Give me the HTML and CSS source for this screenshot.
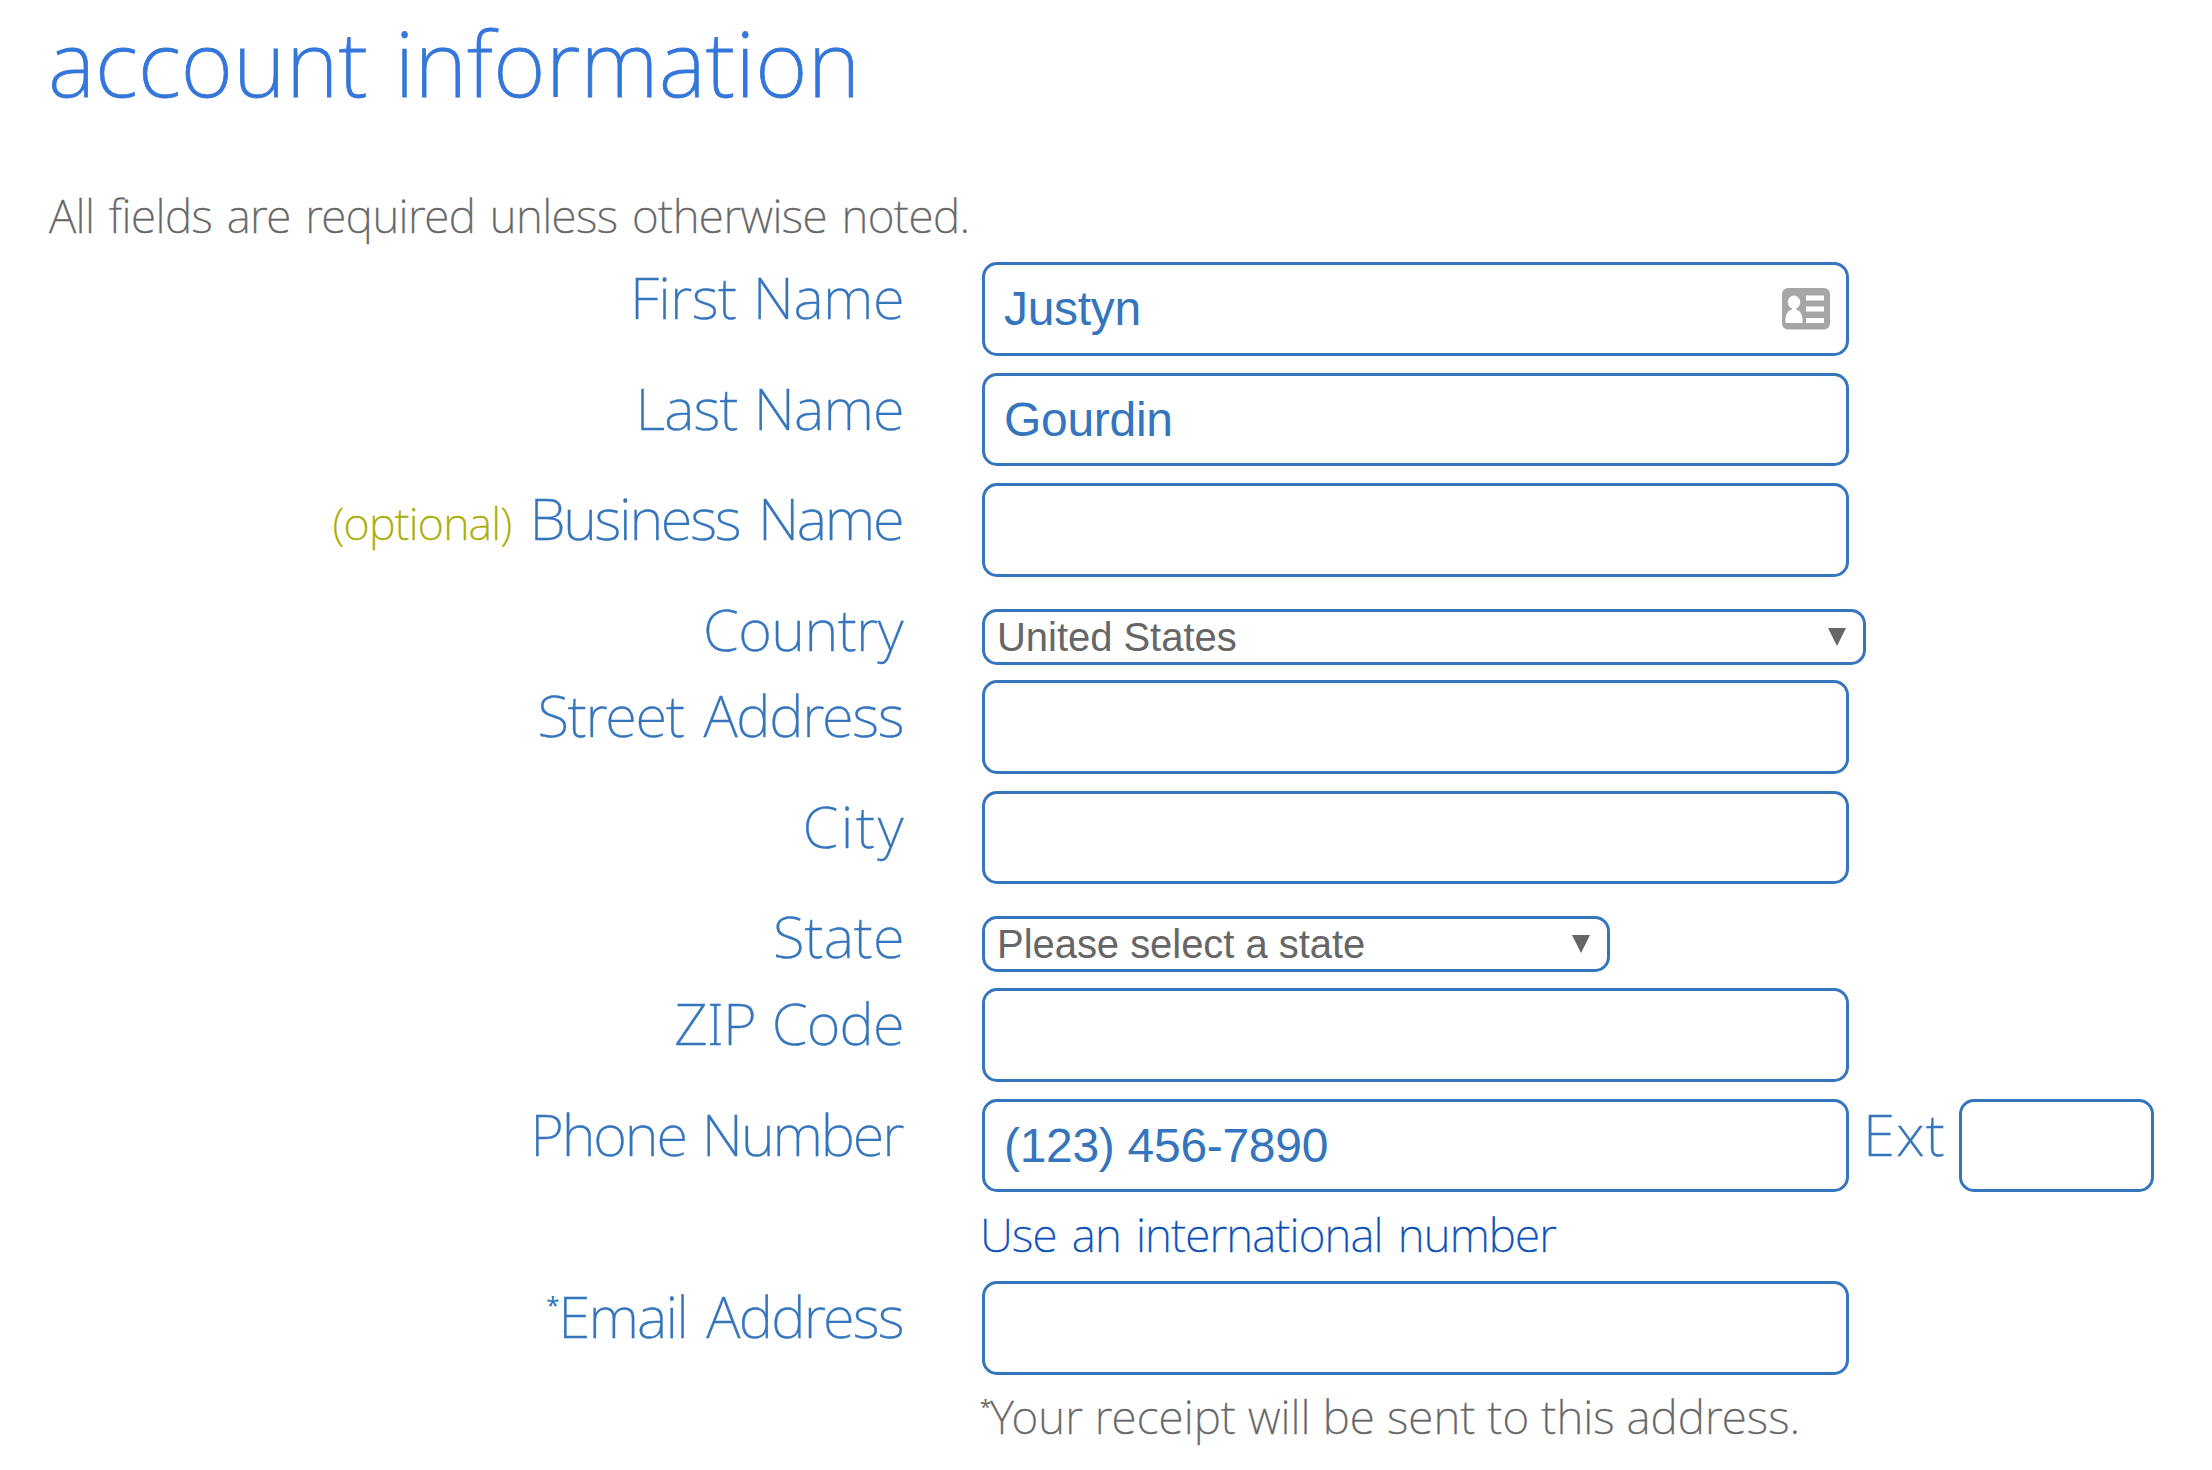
FILE: index.html
```
<!DOCTYPE html>
<html lang="en">
<head>
<meta charset="utf-8">
<title>Account information</title>
<link rel="stylesheet" href="styles.css">
</head>
<body>
<h1 class="title">account information</h1>
<p class="intro">All fields are required unless otherwise noted.</p>
<form class="form">
  <div class="row">
    <label class="label first" for="first">First Name</label>
    <div class="control">
      <input class="input" id="first" type="text" value="Justyn">
      <svg class="card-icon" viewBox="0 0 48 42" width="48" height="42">
        <rect width="48" height="41.5" rx="6" fill="#a6a6a6"/>
        <g fill="#fff">
          <ellipse cx="12" cy="14.300" rx="6.200" ry="6.800"/>
          <path d="M10 19h4v2.500c4 1 6.500 5 6.500 10V35h-17v-3.500c0-5 2.500-9 6.500-10z"/>
          <rect x="24" y="7.500" width="18" height="5"/>
          <rect x="24" y="18.500" width="18" height="5"/>
          <rect x="24" y="30" width="18" height="5"/>
        </g>
      </svg>
    </div>
  </div>
  <div class="row short">
    <label class="label last" for="last">Last Name</label>
    <input class="input low" id="last" type="text" value="Gourdin">
  </div>
  <div class="row">
    <label class="label business" for="business"><span class="optional">(optional)</span>Business Name</label>
    <input class="input" id="business" type="text">
  </div>
  <div class="row select-row">
    <label class="label country" for="country">Country</label>
    <div class="control picker">
      <select class="select" id="country"><option>United States</option></select>
      <svg class="arrow" viewBox="0 0 18 18" width="18" height="18"><path d="M0 0h18L9 18z" fill="#666"/></svg>
    </div>
  </div>
  <div class="row">
    <label class="label street" for="street">Street Address</label>
    <input class="input" id="street" type="text">
  </div>
  <div class="row short">
    <label class="label city" for="city">City</label>
    <input class="input low" id="city" type="text">
  </div>
  <div class="row select-row tall">
    <label class="label state" for="state">State</label>
    <div class="control picker narrow">
      <select class="select" id="state"><option>Please select a state</option></select>
      <svg class="arrow" viewBox="0 0 18 18" width="18" height="18"><path d="M0 0h18L9 18z" fill="#666"/></svg>
    </div>
  </div>
  <div class="row">
    <label class="label zip" for="zip">ZIP Code</label>
    <input class="input" id="zip" type="text">
  </div>
  <div class="row phone-row">
    <label class="label phone" for="phone">Phone Number</label>
    <div>
      <div class="phone-line">
        <input class="input low" id="phone" type="text" value="(123) 456-7890">
        <label class="ext-label" for="ext">Ext</label>
        <input class="input low ext" id="ext" type="text">
      </div>
      <a class="link">Use an international number</a>
    </div>
  </div>
  <div class="row email-row">
    <label class="label email" for="email"><span class="star">*</span>Email Address</label>
    <div>
      <input class="input" id="email" type="text">
      <p class="receipt"><span class="star">*</span>Your receipt will be sent to this address.</p>
    </div>
  </div>
</form>
</body>
</html>
```
FILE: styles.css
```
* { box-sizing: border-box; }
body {
  margin: 0;
  min-height: 100vh;
  background: #fff;
  font-family: "Noto Sans", sans-serif;
  font-weight: 200;
  color: #666;
  -webkit-text-stroke-width: 0.35px;
}
.title {
  margin: 0;
  padding-left: 48px;
  font-size: 90px;
  line-height: 124px;
  font-weight: 200;
  letter-spacing: 0.2px;
  word-spacing: 3px;
  color: #3476d9;
  -webkit-text-stroke-width: 0.8px;
}
.intro {
  margin: 61px 0 17px 49px;
  font-size: 46px;
  line-height: 60px;
  letter-spacing: -0.55px;
  word-spacing: 3px;
}
.row {
  display: grid;
  grid-template-columns: 905px 1fr;
  column-gap: 77px;
  align-items: start;
  height: 111px;
}
.short { height: 110px; }
.select-row { height: 86px; }
.tall { height: 87px; }
.phone-row { height: 182px; }
.email-row { height: 180px; }
.label, .ext-label {
  --track: 0px;
  font-size: 58px;
  line-height: 70px;
  letter-spacing: var(--track);
  color: #3475bd;
  white-space: nowrap;
}
.label {
  text-align: right;
  margin-right: calc(0.5px - var(--track));
}
.first { --track: -0.6px; word-spacing: 2px; }
.last { --track: -0.9px; word-spacing: 2px; }
.business { --track: -2.3px; word-spacing: 6px; }
.country { --track: -0.6px; padding-right: 1px; }
.street { --track: -1.3px; word-spacing: 6px; }
.city { --track: 2.6px; padding-right: 1px; }
.state { --track: 0px; }
.zip { --track: -0.9px; word-spacing: 2px; }
.phone { --track: -2.15px; word-spacing: 3px; }
.email { --track: -1.8px; word-spacing: 6px; }
.optional {
  margin-right: 18px;
  font-size: 45px;
  letter-spacing: -0.75px;
  color: #aaad00;
}
.control {
  display: grid;
  width: 867px;
  align-items: center;
}
.control > * { grid-area: 1 / 1; }
.card-icon { justify-self: end; margin-right: 19px; }
.input {
  width: 867px;
  height: 94px;
  padding: 0 19px 2px;
  border: 3px solid #3475bd;
  border-radius: 15px;
  background: #fff;
  font: 400 48px "Liberation Sans", sans-serif;
  letter-spacing: -0.3px;
  color: #3475bd;
  display: block;
  -webkit-text-stroke-width: 0;
}
.low { height: 93px; padding-bottom: 0; }
.picker { width: 884px; margin-top: 15px; }
.narrow { width: 628px; }
.select {
  appearance: none;
  width: 100%;
  height: 56px;
  padding: 0 12px;
  border: 3px solid #3475bd;
  border-radius: 15px;
  background: #fff;
  font: 400 40px "Liberation Sans", sans-serif;
  letter-spacing: -0.04px;
  color: #666;
  -webkit-text-stroke-width: 0;
}
.arrow { justify-self: end; margin-right: 20px; }
.phone-line { display: flex; align-items: flex-start; }
.ext-label { --track: 1.2px; width: 110px; padding-left: 14px; }
.phone-line .ext { width: 195px; }
.link {
  display: block;
  margin-top: 12px;
  font-size: 46px;
  line-height: 60px;
  letter-spacing: -0.85px;
  word-spacing: 4px;
  color: #0a50b8;
  margin-left: -2px;
}
.receipt {
  margin: 11px 0 0 -2px;
  font-size: 46px;
  line-height: 60px;
  letter-spacing: 0.05px;
  white-space: nowrap;
}
.star {
  display: inline-block;
  line-height: 1;
  font-size: 24px;
  font-weight: 400;
  width: 12px;
  letter-spacing: 0;
  vertical-align: 24px;
  -webkit-text-stroke-width: 0;
}
.receipt .star { font-size: 20px; width: 10px; vertical-align: 20px; }
```
